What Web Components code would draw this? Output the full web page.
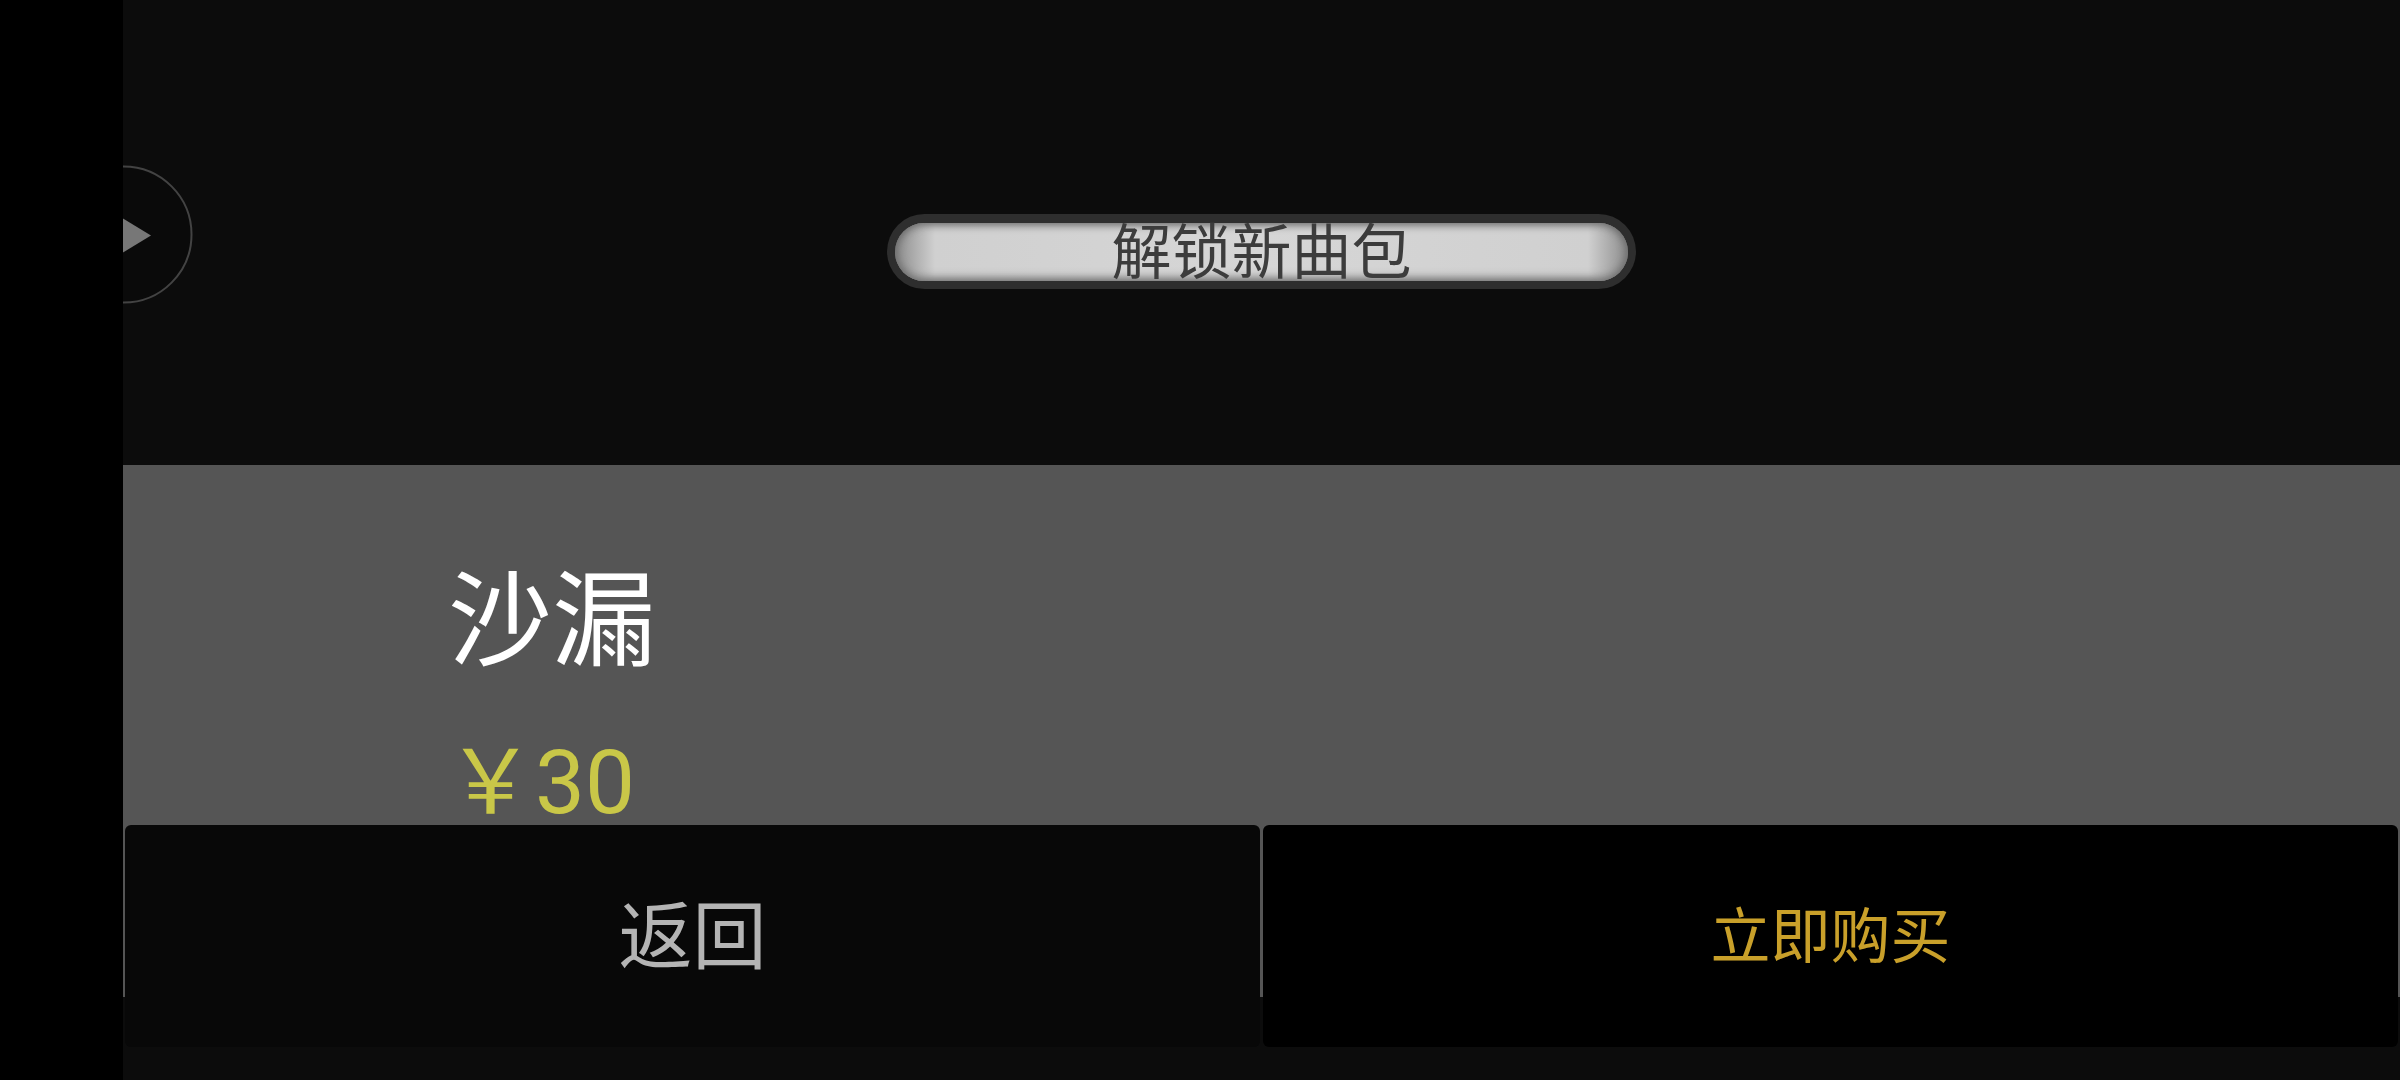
<!DOCTYPE html>
<html lang="zh">
<head>
<meta charset="utf-8">
<title>解锁新曲包</title>
<style>
  html, body { margin:0; height:100%; background:#000; overflow:hidden }
  body { font-family:Roboto, "Noto Sans CJK SC", sans-serif }
</style>
</head>
<body>
<shop-screen>
  <play-toggle slot="overlay"></play-toggle>
  <unlock-pill slot="top">解锁新曲包</unlock-pill>
  <product-panel slot="panel" name="沙漏" price="￥30">
    <action-button slot="actions" tone="back">返回</action-button>
    <action-button slot="actions" tone="buy">立即购买</action-button>
  </product-panel>
</shop-screen>

<script>
// black strip on the left, everything else lives in the main column
class ShopScreen extends HTMLElement {
  constructor(){
    super();
    this.attachShadow({mode:'open'}).innerHTML = `
      <style>
        :host { display:flex; width:2400px; height:1080px; background:#000 }
        .strip { width:123px; flex:none; background:#000 }
        .main { flex:1; position:relative; overflow:hidden; background:#0c0c0c; display:flex; flex-direction:column }
        .top { height:465px; box-sizing:border-box; padding-top:214px; display:flex; justify-content:center; align-items:flex-start }
      </style>
      <div class="strip"></div>
      <div class="main">
        <slot name="overlay"></slot>
        <div class="top"><slot name="top"></slot></div>
        <slot name="panel"></slot>
      </div>`;
  }
}

// half hidden round button, its centre sits on the edge of the strip
class PlayToggle extends HTMLElement {
  constructor(){
    super();
    this.attachShadow({mode:'open'}).innerHTML = `
      <style>
        :host { display:block; position:absolute; left:-69px; top:165px; width:139px; height:139px }
        svg { display:block }
      </style>
      <svg width="139" height="139" viewBox="0 0 139 139">
        <circle cx="69.5" cy="69.5" r="68" fill="#0a0a0a" stroke="#434343" stroke-width="2"/>
        <path d="M50 42 L97 70.5 L50 99 Z" fill="#777"/>
      </svg>`;
  }
}

class UnlockPill extends HTMLElement {
  constructor(){
    super();
    this.attachShadow({mode:'open'}).innerHTML = `
      <style>
        :host { display:block; width:749px; height:75px; box-sizing:border-box; border-radius:38px; background:#2e2e2e; padding:9px 8px 8px }
        .in { height:100%; box-sizing:border-box; padding-top:3px; border-radius:30px;
              background:linear-gradient(90deg, #8c8c8c 0, #d0d0d0 40px, #d6d6d6 50%, #d0d0d0 calc(100% - 40px), #8c8c8c 100%);
              box-shadow:inset 0 2px 8px #6a6a6a, inset 0 -3px 10px #7a7a7a;
              display:flex; align-items:center; justify-content:center;
              color:#3c3c3c; font-size:60px; line-height:58px; white-space:nowrap }
      </style>
      <div class="in"><slot></slot></div>`;
  }
}

class ProductPanel extends HTMLElement {
  constructor(){
    super();
    this.attachShadow({mode:'open'}).innerHTML = `
      <style>
        :host { display:flex; flex-direction:column; height:532px; background:#555 }
        .info { padding:93px 0 0 327px }
        .name { color:#fff; font-size:104px; line-height:130px; margin-left:-2px }
        .price { color:#c9c748; font-size:89px; line-height:80px; margin-top:55px; margin-left:-4px }
        .actions { margin-top:auto; margin-bottom:-50px; padding:0 2px; display:flex; gap:3px }
      </style>
      <div class="info">
        <div class="name"></div>
        <div class="price"></div>
      </div>
      <div class="actions"><slot name="actions"></slot></div>`;
  }
  connectedCallback(){
    this.shadowRoot.querySelector('.name').textContent = this.getAttribute('name');
    this.shadowRoot.querySelector('.price').textContent = this.getAttribute('price');
  }
}

class ActionButton extends HTMLElement {
  constructor(){
    super();
    this.attachShadow({mode:'open'}).innerHTML = `
      <style>
        :host { flex:1; height:222px; box-sizing:border-box; padding-bottom:12px; display:flex; align-items:center; justify-content:center; border-radius:6px;
                background:#080808; color:#b4b4b4; font-size:74px }
        :host([tone="buy"]) { background:#000; color:#c9a02a; font-size:60px; padding-bottom:9px }
      </style>
      <slot></slot>`;
  }
}

customElements.define('shop-screen', ShopScreen);
customElements.define('play-toggle', PlayToggle);
customElements.define('unlock-pill', UnlockPill);
customElements.define('product-panel', ProductPanel);
customElements.define('action-button', ActionButton);
</script>
</body>
</html>
